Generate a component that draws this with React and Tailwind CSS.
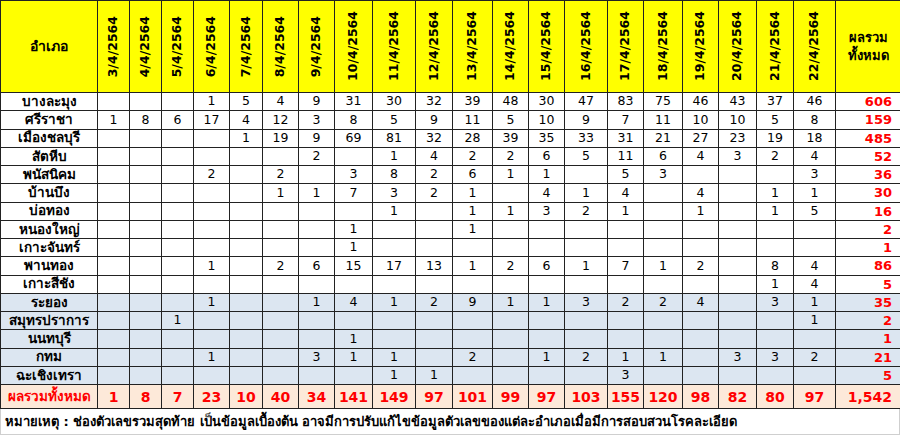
import React from 'react'

const dates = [
	'3/4/2564', '4/4/2564', '5/4/2564', '6/4/2564', '7/4/2564', '8/4/2564', '9/4/2564',
	'10/4/2564', '11/4/2564', '12/4/2564', '13/4/2564', '14/4/2564', '15/4/2564', '16/4/2564',
	'17/4/2564', '18/4/2564', '19/4/2564', '20/4/2564', '21/4/2564', '22/4/2564',
]

const colWidths = [
	'w-[32px]', 'w-[32px]', 'w-[32px]', 'w-[36px]', 'w-[33px]', 'w-[36px]', 'w-[36px]',
	'w-[38px]', 'w-[43px]', 'w-[37px]', 'w-[40px]', 'w-[36px]', 'w-[36px]', 'w-[43px]',
	'w-[36px]', 'w-[39px]', 'w-[36px]', 'w-[38px]', 'w-[37px]', 'w-[42px]',
]

const _ = ''

const rows = [
	{ name: 'บางละมุง', values: [_, _, _, 1, 5, 4, 9, 31, 30, 32, 39, 48, 30, 47, 83, 75, 46, 43, 37, 46], total: '606' },
	{ name: 'ศรีราชา', values: [1, 8, 6, 17, 4, 12, 3, 8, 5, 9, 11, 5, 10, 9, 7, 11, 10, 10, 5, 8], total: '159' },
	{ name: 'เมืองชลบุรี', values: [_, _, _, _, 1, 19, 9, 69, 81, 32, 28, 39, 35, 33, 31, 21, 27, 23, 19, 18], total: '485' },
	{ name: 'สัตหีบ', values: [_, _, _, _, _, _, 2, _, 1, 4, 2, 2, 6, 5, 11, 6, 4, 3, 2, 4], total: '52' },
	{ name: 'พนัสนิคม', values: [_, _, _, 2, _, 2, _, 3, 8, 2, 6, 1, 1, _, 5, 3, _, _, _, 3], total: '36' },
	{ name: 'บ้านบึง', values: [_, _, _, _, _, 1, 1, 7, 3, 2, 1, _, 4, 1, 4, _, 4, _, 1, 1], total: '30' },
	{ name: 'บ่อทอง', values: [_, _, _, _, _, _, _, _, 1, _, 1, 1, 3, 2, 1, _, 1, _, 1, 5], total: '16' },
	{ name: 'หนองใหญ่', values: [_, _, _, _, _, _, _, 1, _, _, 1, _, _, _, _, _, _, _, _, _], total: '2' },
	{ name: 'เกาะจันทร์', values: [_, _, _, _, _, _, _, 1, _, _, _, _, _, _, _, _, _, _, _, _], total: '1' },
	{ name: 'พานทอง', values: [_, _, _, 1, _, 2, 6, 15, 17, 13, 1, 2, 6, 1, 7, 1, 2, _, 8, 4], total: '86' },
	{ name: 'เกาะสีชัง', values: [_, _, _, _, _, _, _, _, _, _, _, _, _, _, _, _, _, _, 1, 4], total: '5' },
	{ name: 'ระยอง', values: [_, _, _, 1, _, _, 1, 4, 1, 2, 9, 1, 1, 3, 2, 2, 4, _, 3, 1], total: '35', other: true },
	{ name: 'สมุทรปราการ', values: [_, _, 1, _, _, _, _, _, _, _, _, _, _, _, _, _, _, _, _, 1], total: '2', other: true },
	{ name: 'นนทบุรี', values: [_, _, _, _, _, _, _, 1, _, _, _, _, _, _, _, _, _, _, _, _], total: '1', other: true },
	{ name: 'กทม', values: [_, _, _, 1, _, _, 3, 1, 1, _, 2, _, 1, 2, 1, 1, _, 3, 3, 2], total: '21', other: true },
	{ name: 'ฉะเชิงเทรา', values: [_, _, _, _, _, _, _, _, 1, 1, _, _, _, _, 3, _, _, _, _, _], total: '5', other: true },
]

const totals = [1, 8, 7, 23, 10, 40, 34, 141, 149, 97, 101, 99, 97, 103, 155, 120, 98, 82, 80, 97]

export default function App() {
	return (
		<main className="h-[435px] w-[900px] overflow-hidden bg-white font-['DejaVu_Sans','Noto_Sans',sans-serif] text-black">
			<table className="w-[900px] table-fixed border-collapse">
				<colgroup>
					<col className="w-[97px]" />
					{colWidths.map((width, index) => (
						<col key={index} className={width} />
					))}
					<col className="w-[65px]" />
				</colgroup>
				<thead>
					<tr className="h-[92px] bg-[#ffff00]">
						<th className="border border-[#222] text-[14px] font-bold">อำเภอ</th>
						{dates.map((date) => (
							<th key={date} className="border border-[#222] p-0">
								<div className="flex h-[90px] items-center justify-center">
									<span className="rotate-180 text-[12.5px] leading-none font-bold [writing-mode:vertical-rl]">
										{date}
									</span>
								</div>
							</th>
						))}
						<th className="border border-[#222] text-[13px] leading-[18px] font-bold">
							ผลรวม
							<br />
							ทั้งหมด
						</th>
					</tr>
				</thead>
				<tbody>
					{rows.map((row) => (
						<tr key={row.name} className={`h-[18.25px] ${row.other ? 'bg-[#dce6f1]' : 'bg-white'}`}>
							<td className="border border-[#222] p-0 text-center text-[13.5px] leading-none font-bold">{row.name}</td>
							{row.values.map((value, index) => (
								<td key={index} className="border border-[#222] p-0 text-center text-[12.5px] leading-none">
									{value}
								</td>
							))}
							<td className="border border-[#222] p-0 pr-[8px] text-right text-[13px] leading-none font-bold text-[#ff0000]">
								{row.total}
							</td>
						</tr>
					))}
					<tr className="h-[24px] bg-[#fde9d9] text-[#ff0000]">
						<td className="border border-[#222] p-0 text-center text-[13.5px] leading-none font-bold">ผลรวมทั้งหมด</td>
						{totals.map((value, index) => (
							<td key={index} className="border border-[#222] p-0 text-center text-[14px] leading-none font-bold">
								{value}
							</td>
						))}
						<td className="border border-[#222] p-0 pr-[8px] text-right text-[14px] leading-none font-bold">1,542</td>
					</tr>
				</tbody>
			</table>
			<div className="flex h-[26px] w-[900px] items-center border-x border-b border-[#cfcfcf] pl-[4px] text-[13px] font-bold">
				หมายเหตุ : ช่องตัวเลขรวมสุดท้าย เป็นข้อมูลเบื้องต้น อาจมีการปรับแก้ไขข้อมูลตัวเลขของแต่ละอำเภอเมื่อมีการสอบสวนโรคละเอียด
			</div>
		</main>
	)
}
